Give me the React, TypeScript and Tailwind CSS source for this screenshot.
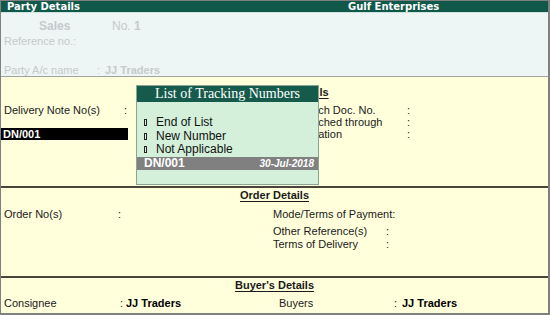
import React from 'react';

const sans = "font-['Liberation_Sans',Arial,sans-serif]";

const Colon: React.FC = () => <span className="w-[6px]">:</span>;

const TrackingPopup: React.FC = () => {
  const items = ['End of List', 'New Number', 'Not Applicable'];
  return (
    <div className="absolute left-[135px] top-[84px] w-[183px] h-[100px] border border-[#8aa596] bg-[#d4f0da] flex flex-col">
      <div className="h-[16px] bg-[#165a4b] text-white text-center text-[14px] leading-[16px] font-['Liberation_Serif','Times_New_Roman',serif]">
        List of Tracking Numbers
      </div>
      <div className="pt-[14px] text-[12px] text-[#111]">
        {items.map((item) => (
          <div key={item} className="h-[13.5px] flex items-center pl-[7px]">
            <span className="w-[3px] h-[7px] border border-[#222] mr-[9px]" />
            <span className="leading-[13px]">{item}</span>
          </div>
        ))}
        <div className="h-[13.5px] bg-[#808080] text-white font-bold flex items-center justify-between pl-[7px] pr-[4px]">
          <span className="text-[12px] leading-[13px]">DN/001</span>
          <span className="text-[10px] italic leading-[13px]">30-Jul-2018</span>
        </div>
      </div>
    </div>
  );
};

export default function App() {
  return (
    <div className={`relative w-[550px] h-[315px] overflow-hidden border-t border-l border-r-2 border-b-2 border-[#808080] bg-[#ffffdc] ${sans} text-[11px] text-[#1a1a1a]`}>
      {/* title bar */}
      <div className="h-[11px] bg-[#10594a] flex text-white font-bold text-[10px] leading-[11px] font-['DejaVu_Sans',Verdana,sans-serif]">
        <span className="w-[347px] pl-[6px]">Party Details</span>
        <span>Gulf Enterprises</span>
      </div>
      <div className="h-px bg-[#cfe3df]" />

      {/* voucher head (dimmed) */}
      <div className="h-[64px] bg-[#edf5f5] border-b border-[#a3a3a3] pt-[7px] text-[#c5caca]">
        <div className="h-[12px] leading-[12px] flex text-[12px]">
          <span className="w-[111px] pl-[38px] font-bold">Sales</span>
          <span>
            No. <span className="font-bold">1</span>
          </span>
        </div>
        <div className="mt-[3px] h-[12px] leading-[12px] pl-[3px]">Reference no.:</div>
        <div className="mt-[17px] h-[12px] leading-[12px] pl-[3px] flex">
          <span className="w-[93px]">Party A/c name</span>
          <Colon />
          <span className="pl-[2px] font-bold">JJ Traders</span>
        </div>
      </div>

      {/* dispatch details */}
      <div className="h-[111px] border-b-2 border-[#45453a] pt-[9px]">
        <div className="h-[13px] leading-[13px] pl-[242px]">
          <span className="font-bold underline underline-offset-2">Dispatch Details</span>
        </div>
        <div className="mt-[5px] flex">
          <div className="w-[286px]">
            <div className="h-[12px] leading-[12px] flex pl-[3px]">
              <span className="w-[120px]">Delivery Note No(s)</span>
              <Colon />
            </div>
            <div className="h-[12px]" />
            <div className="w-[127px] h-[12px] leading-[12px] bg-black text-white font-bold pl-[2px]">DN/001</div>
          </div>
          <div>
            {['Dispatch Doc. No.', 'Dispatched through', 'Destination'].map((l) => (
              <div key={l} className="h-[12px] leading-[12px] flex">
                <span className="w-[120px]">{l}</span>
                <Colon />
              </div>
            ))}
          </div>
        </div>
      </div>

      {/* order details */}
      <div className="h-[90px] border-b-2 border-[#45453a] pt-[1px]">
        <div className="h-[13px] leading-[13px] text-center">
          <span className="font-bold underline underline-offset-2">Order Details</span>
        </div>
        <div className="mt-[6px] flex">
          <div className="w-[272px] pl-[3px]">
            <div className="h-[12px] leading-[12px] flex">
              <span className="w-[114px]">Order No(s)</span>
              <Colon />
            </div>
          </div>
          <div>
            <div className="h-[12px] leading-[12px]">Mode/Terms of Payment:</div>
            <div className="mt-[5px] h-[13px] leading-[13px] flex">
              <span className="w-[113px]">Other Reference(s)</span>
              <Colon />
            </div>
            <div className="h-[13px] leading-[13px] flex">
              <span className="w-[113px]">Terms of Delivery</span>
              <Colon />
            </div>
          </div>
        </div>
      </div>

      {/* buyer's details */}
      <div className="h-[35px] pt-[1px]">
        <div className="h-[13px] leading-[13px] text-center">
          <span className="font-bold underline underline-offset-2">Buyer's Details</span>
        </div>
        <div className="mt-[5px] h-[12px] leading-[12px] flex">
          <div className="w-[278px] pl-[3px] flex">
            <span className="w-[116px]">Consignee</span>
            <Colon />
            <span className="font-bold text-black">JJ Traders</span>
          </div>
          <div className="flex">
            <span className="w-[115px]">Buyers</span>
            <Colon />
            <span className="pl-[2px] font-bold text-black">JJ Traders</span>
          </div>
        </div>
      </div>

      <TrackingPopup />
    </div>
  );
}
